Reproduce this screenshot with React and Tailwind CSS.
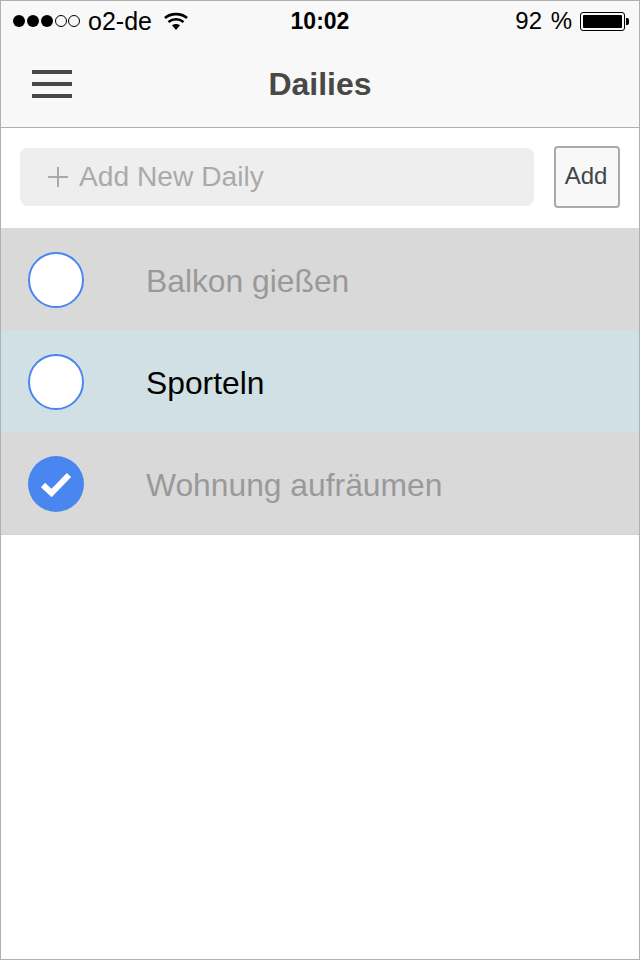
import React from 'react';

const font = 'font-["Liberation_Sans",Arial,sans-serif]';

function Dots() {
  return (
    <div className="flex items-center gap-[2px]">
      <span className="w-[12px] h-[12px] rounded-full bg-black" />
      <span className="w-[12px] h-[12px] rounded-full bg-black" />
      <span className="w-[12px] h-[12px] rounded-full bg-black" />
      <span className="w-[12px] h-[12px] rounded-full border border-black" />
      <span className="w-[12px] h-[12px] -ml-[1px] rounded-full border border-black" />
    </div>
  );
}

function Wifi() {
  return (
    <svg width="24" height="19" viewBox="0 0 24 19" fill="none">
      <path d="M1 6C6.5 0.8 17.5 0.8 23 6" stroke="#000" strokeWidth="2.6" />
      <path d="M4.5 10C9 6.4 15 6.4 19.5 10" stroke="#000" strokeWidth="2.6" />
      <path d="M8 13.2C10.5 11.6 13.5 11.6 16 13.2L12 18Z" fill="#000" />
    </svg>
  );
}

function Battery() {
  return (
    <div className="flex items-center">
      <div className="w-[45px] h-[19px] rounded-[3px] border border-black p-[2px]">
        <div className="w-[39px] h-full bg-black rounded-[1px]" />
      </div>
      <div className="w-[3px] h-[7px] bg-black rounded-r-[2px] ml-[1px]" />
    </div>
  );
}

function Row({ label, done, active }) {
  return (
    <div className={`h-[102px] pl-[27px] pt-[2px] flex items-center ${active ? 'bg-[#d1e0e4]' : 'bg-[#d9d9d9]'}`}>
      {done ? (
        <div className="w-[56px] h-[56px] rounded-full bg-[#4a86f0] flex items-center justify-center">
          <svg width="32" height="26" viewBox="0 0 32 26">
            <path d="M3 14L11.5 22L29 4" fill="none" stroke="#fff" strokeWidth="6" />
          </svg>
        </div>
      ) : (
        <div className="w-[56px] h-[56px] rounded-full bg-white border-2 border-[#4a86f0]" />
      )}
      <span className={`ml-[62px] mt-[4px] text-[31.8px] ${active ? 'text-black' : 'text-[#999999]'}`}>{label}</span>
    </div>
  );
}

export default function App() {
  return (
    <div className={`${font} w-[640px] h-[960px] bg-white border border-[#b0b0b0] flex flex-col overflow-hidden`}>
      <header className="h-[127px] shrink-0 bg-[#f8f8f8] border-b border-[#b0b0b0]">
        <div className="h-[40px] pl-[12px] pr-[10px] flex items-center justify-between text-black">
          <div className="flex items-center w-[230px]">
            <Dots />
            <span className="ml-[8px] text-[25px] leading-none">o2-de</span>
            <span className="ml-[12px]"><Wifi /></span>
          </div>
          <span className="text-[23px] font-bold mr-[2px]">10:02</span>
          <div className="flex items-center w-[230px] justify-end">
            <span className="text-[24px] [word-spacing:2px] mr-[8px]">92 %</span>
            <Battery />
          </div>
        </div>
        <div className="relative h-[86px] flex items-center justify-center">
          <div className="absolute left-[31px] top-[29px] w-[40px] flex flex-col gap-[8px]">
            <span className="h-[4px] bg-[#484848]" />
            <span className="h-[4px] bg-[#484848]" />
            <span className="h-[4px] bg-[#484848]" />
          </div>
          <h1 className="text-[32px] font-bold text-[#484848]">Dailies</h1>
        </div>
      </header>
      <div className="h-[100px] shrink-0 px-[19px] pb-[2px] flex items-center justify-between">
        <div className="w-[514px] h-[58px] bg-[#eeeeee] rounded-[8px] flex items-center pl-[28px] text-[#aaaaaa]">
          <svg width="20" height="20" viewBox="0 0 20 20">
            <path d="M10 0V20M0 10H20" stroke="#aaaaaa" strokeWidth="2" />
          </svg>
          <span className="ml-[11px] -mt-[2px] text-[28.2px]">Add New Daily</span>
        </div>
        <button className="w-[66px] h-[62px] pr-[2px] pb-[2px] bg-[#f8f8f8] border-2 border-[#aaaaaa] rounded-[4px] text-[24px] text-[#444444]">Add</button>
      </div>
      <Row label="Balkon gießen" />
      <Row label="Sporteln" active />
      <Row label="Wohnung aufräumen" done />
      <div className="border-t border-[#d2d2d2]" />
    </div>
  );
}
